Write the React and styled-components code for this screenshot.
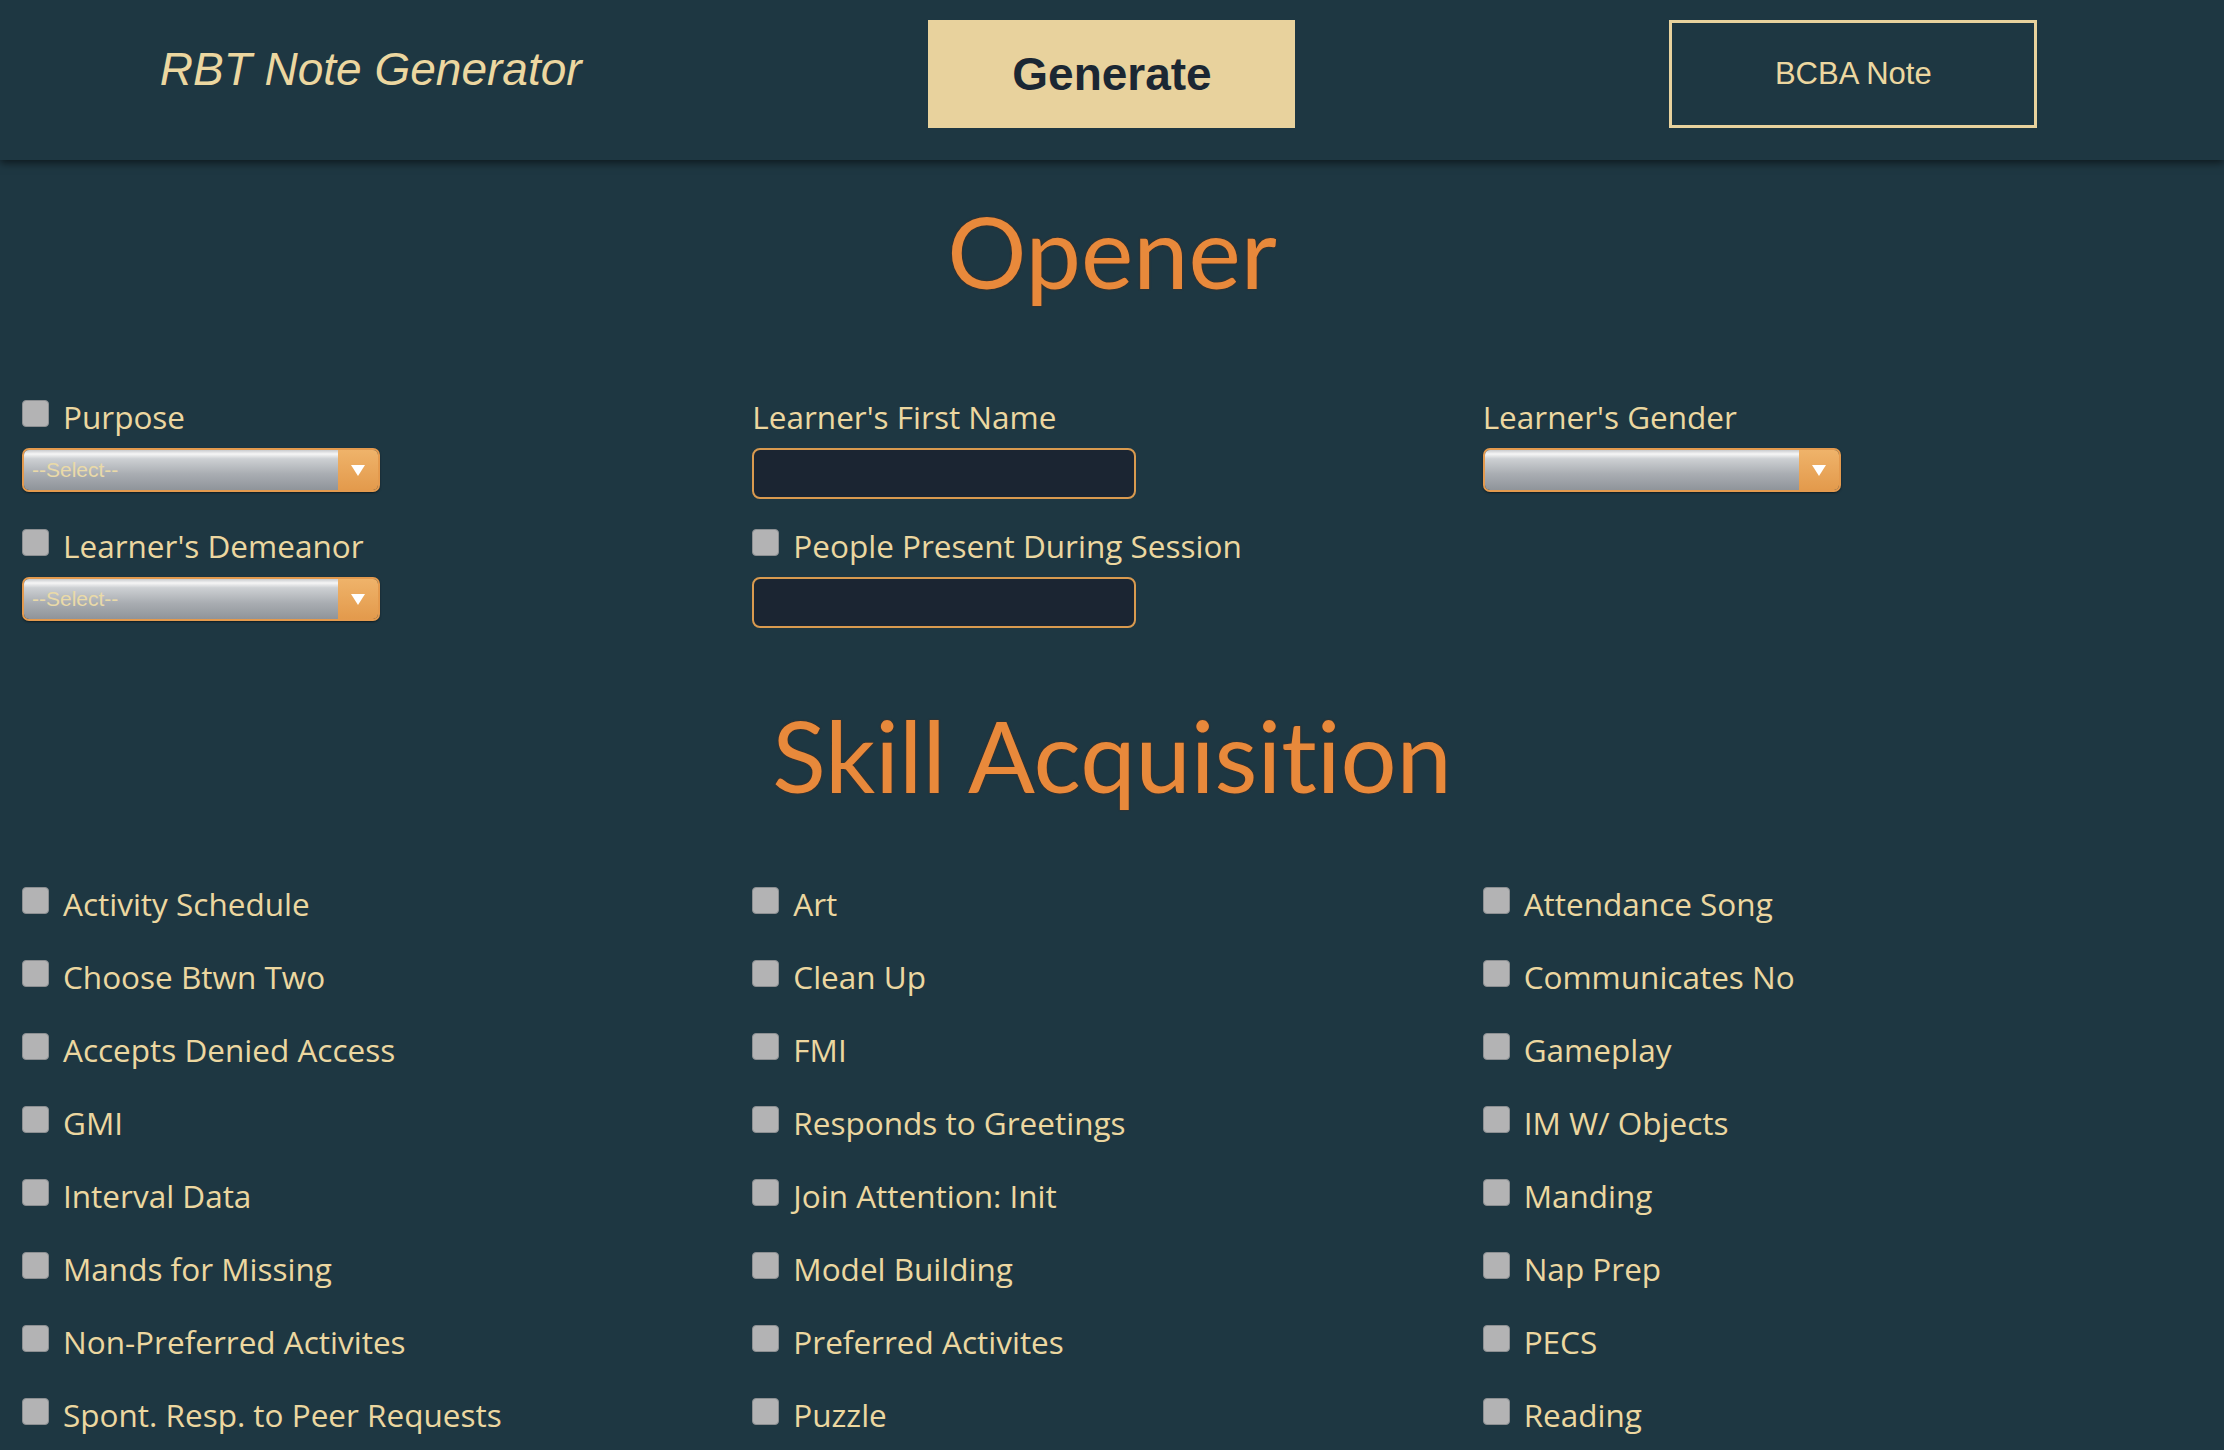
import styled, { createGlobalStyle } from "styled-components";

const GlobalStyle = createGlobalStyle`
  body {
    margin: 0;
    background: #1e3742;
    font-family: "Open Sans", "Noto Sans", sans-serif;
  }
`;

const openerFields = [
  { label: "Purpose", check: true, kind: "select", text: "--Select--" },
  { label: "Learner's First Name", check: false, kind: "input" },
  { label: "Learner's Gender", check: false, kind: "select", text: "" },
  { label: "Learner's Demeanor", check: true, kind: "select", text: "--Select--" },
  { label: "People Present During Session", check: true, kind: "input" },
];

const skills = [
  "Activity Schedule", "Art", "Attendance Song",
  "Choose Btwn Two", "Clean Up", "Communicates No",
  "Accepts Denied Access", "FMI", "Gameplay",
  "GMI", "Responds to Greetings", "IM W/ Objects",
  "Interval Data", "Join Attention: Init", "Manding",
  "Mands for Missing", "Model Building", "Nap Prep",
  "Non-Preferred Activites", "Preferred Activites", "PECS",
  "Spont. Resp. to Peer Requests", "Puzzle", "Reading",
];

const App = () => {
  return (
    <>
      <GlobalStyle />
      <Header>
        <Title>RBT Note Generator</Title>
        <GenerateButton>Generate</GenerateButton>
        <OutlineButton>BCBA Note</OutlineButton>
      </Header>

      <SectionTitle>Opener</SectionTitle>
      <OpenerGrid>
        {openerFields.map((f) => (
          <Field key={f.label}>
            <LabelRow>
              {f.check && <Check type="checkbox" />}
              <span>{f.label}</span>
            </LabelRow>
            {f.kind === "select" ? (
              <SelectBox>
                <SelectText>{f.text}</SelectText>
                <SelectArrow>
                  <svg width="14" height="11" viewBox="0 0 14 11">
                    <path d="M0 0 H14 L7 11 Z" fill="#fff" />
                  </svg>
                </SelectArrow>
              </SelectBox>
            ) : (
              <TextInput type="text" />
            )}
          </Field>
        ))}
      </OpenerGrid>

      <SectionTitle $gap={67}>Skill Acquisition</SectionTitle>
      <SkillGrid>
        {skills.map((s) => (
          <LabelRow key={s}>
            <Check type="checkbox" />
            <span>{s}</span>
          </LabelRow>
        ))}
      </SkillGrid>
    </>
  );
};

const Header = styled.header`
  display: grid;
  grid-template-columns: repeat(3, 1fr);
  align-items: center;
  justify-items: center;
  height: 160px;
  box-sizing: border-box;
  padding-bottom: 12px;
  background: #1e3742;
  box-shadow: 0 3px 8px rgba(0, 0, 0, 0.55);
  position: relative;
`;

const Title = styled.div`
  font-family: "Liberation Sans", Arial, sans-serif;
  font-style: italic;
  font-size: 46px;
  color: #ecd7a0;
  margin-top: -10px;
`;

const GenerateButton = styled.button`
  width: 367px;
  height: 108px;
  background: #e8d29d;
  border: none;
  color: #1b2733;
  font-family: "Liberation Sans", Arial, sans-serif;
  font-weight: 700;
  font-size: 46px;
`;

const OutlineButton = styled.button`
  width: 368px;
  height: 108px;
  background: transparent;
  border: 3px solid #e8d29d;
  color: #ecd7a0;
  font-family: "Liberation Sans", Arial, sans-serif;
  font-size: 31px;
`;

const SectionTitle = styled.h2`
  margin: ${({ $gap }) => $gap || 31}px 0 0;
  text-align: center;
  font-family: "Lato", "Noto Sans", sans-serif;
  font-weight: 400;
  font-size: 99px;
  line-height: 120px;
  font-variant-ligatures: none;
  color: #e8893b;
  text-shadow: 0 0 2px #5a2a14;
`;

const OpenerGrid = styled.div`
  display: grid;
  grid-template-columns: repeat(3, 1fr);
  align-items: start;
  row-gap: 26px;
  padding: 0 11px 0 22px;
  margin-top: 85px;
`;

const Field = styled.div`
  display: flex;
  flex-direction: column;
  gap: 12px;
`;

const LabelRow = styled.label`
  display: flex;
  align-items: center;
  gap: 14px;
  height: 40px;
  font-size: 31.5px;
  color: #ecd7a0;
`;

const Check = styled.input`
  appearance: none;
  margin: 0;
  width: 27px;
  height: 27px;
  flex: none;
  background: #b3b3b4;
  border: 1px solid #8c8f92;
  border-radius: 4px;
  margin-top: -6px;
`;

const SelectBox = styled.div`
  display: flex;
  width: 358px;
  height: 44px;
  box-sizing: border-box;
  border: 2px solid #e49a4e;
  border-radius: 7px;
  overflow: hidden;
  box-shadow: 0 1px 2px rgba(0, 0, 0, 0.5);
`;

const SelectText = styled.div`
  flex: 1;
  display: flex;
  align-items: center;
  padding-left: 8px;
  font-family: "Liberation Sans", Arial, sans-serif;
  font-size: 21px;
  color: #eadaa8;
  background: linear-gradient(
    to bottom,
    #c9cbce 0%,
    #f6f6f6 10%,
    #cdd0d3 22%,
    #a9adb2 60%,
    #8f949a 100%
  );
`;

const SelectArrow = styled.div`
  width: 40px;
  display: flex;
  align-items: center;
  justify-content: center;
  background: linear-gradient(to bottom, #efb36a, #e39a4c);
`;

const TextInput = styled.input`
  width: 384px;
  height: 51px;
  box-sizing: border-box;
  background: #1b2532;
  border: 2px solid #d99a4f;
  border-radius: 8px;
  outline: none;
`;

const SkillGrid = styled.div`
  display: grid;
  grid-template-columns: repeat(3, 1fr);
  row-gap: 33px;
  padding: 0 11px 0 22px;
  margin-top: 68px;
`;

export default App;
